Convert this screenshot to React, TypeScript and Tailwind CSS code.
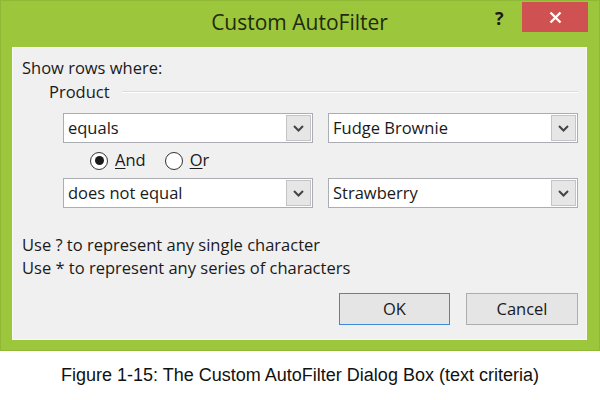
import React, { useState } from "react";

const ui = { fontFamily: '"Open Sans", "Noto Sans", sans-serif' };

const Chevron = () => (
  <svg width="11" height="7" viewBox="0 0 11 7">
    <path d="M1 1 L5.5 5.5 L10 1" fill="none" stroke="#444" strokeWidth="2" />
  </svg>
);

interface ComboProps {
  value: string;
  width: string;
}

const Combo: React.FC<ComboProps> = ({ value, width }) => (
  <div className={`flex h-[30px] ${width} border border-[#abadb3] bg-white`}>
    <div className="flex-1 flex items-center pl-[4px] text-[16.5px] text-[#1a1a1a]">{value}</div>
    <div className="w-[25px] flex items-center justify-center bg-[#e6e6e6] m-[1px] ml-0 border border-[#c4c4c4]">
      <Chevron />
    </div>
  </div>
);

const Radio = ({ checked, onClick }: { checked: boolean; onClick: () => void }) => (
  <div
    onClick={onClick}
    className="w-[18px] h-[18px] rounded-full border border-[#333] bg-white flex items-center justify-center"
  >
    {checked && <div className="w-[9px] h-[9px] rounded-full bg-[#1a1a1a]" />}
  </div>
);

export default function App() {
  const [and, setAnd] = useState(true);

  return (
    <div className="w-[600px] h-[400px] bg-white flex flex-col">
      <div className="w-[600px] h-[351px] bg-[#9cc63b] border border-[#8fb834] flex flex-col pl-[11px] pr-[12px] pb-[10px]">
        {/* title bar */}
        <div className="relative h-[46px] flex items-center justify-center">
          <span className="text-[21px] text-[#1f2a10] -mt-[2px]" style={ui}>
            Custom AutoFilter
          </span>
          <span className="absolute left-[483px] top-[4px] text-[18px] font-bold text-[#1a1a1a]" style={ui}>
            ?
          </span>
          <div className="absolute left-[510px] top-[1px] w-[66px] h-[30px] bg-[#cf5151] flex items-center justify-center">
            <svg width="13" height="13" viewBox="0 0 13 13">
              <path d="M1.5 1.5 L11.5 11.5 M11.5 1.5 L1.5 11.5" stroke="#fff" strokeWidth="2.4" />
            </svg>
          </div>
        </div>

        {/* client panel */}
        <div className="flex-1 bg-[#f0f0f0] border border-[#f7f7f7] flex flex-col pl-[9px] pr-[8px] pt-[10px] text-[16.5px] text-[#1a1a1a]" style={ui}>
          <div className="h-[20px] leading-[20px]">Show rows where:</div>
          <div className="flex items-center h-[28px] pl-[27px] gap-[12px]">
            <span>Product</span>
            <div className="flex-1 h-[2px] border-t border-[#dcdcdc] border-b border-b-white" />
          </div>

          <div className="flex gap-[15px] pl-[41px] mt-[7px]">
            <Combo value="equals" width="w-[251px]" />
            <Combo value="Fudge Brownie" width="w-[251px]" />
          </div>

          <div className="flex items-center h-[35px] pl-[68px]">
            <Radio checked={and} onClick={() => setAnd(true)} />
            <span className="ml-[7px]">
              <span className="underline underline-offset-2">A</span>nd
            </span>
            <div className="ml-[19px]">
              <Radio checked={!and} onClick={() => setAnd(false)} />
            </div>
            <span className="ml-[7px]">
              <span className="underline underline-offset-2">O</span>r
            </span>
          </div>

          <div className="flex gap-[15px] pl-[41px]">
            <Combo value="does not equal" width="w-[251px]" />
            <Combo value="Strawberry" width="w-[251px]" />
          </div>

          <div className="mt-[25px] leading-[23px]">
            <div>Use ? to represent any single character</div>
            <div>Use * to represent any series of characters</div>
          </div>

          <div className="flex justify-end gap-[16px] mt-[14px]">
            <button className="w-[111px] h-[32px] border border-[#3c8ad6] bg-[#e5e5e5] text-[16.5px] text-[#1a1a1a]">OK</button>
            <button className="w-[112px] h-[32px] border border-[#adadad] bg-[#e5e5e5] text-[16.5px] text-[#1a1a1a]">Cancel</button>
          </div>
        </div>
      </div>

      <div
        className="flex-1 flex items-center justify-center text-[18px] text-[#111] pb-[1px]"
        style={{ fontFamily: '"Liberation Sans", Arial, sans-serif' }}
      >
        Figure 1-15: The Custom AutoFilter Dialog Box (text criteria)
      </div>
    </div>
  );
}
